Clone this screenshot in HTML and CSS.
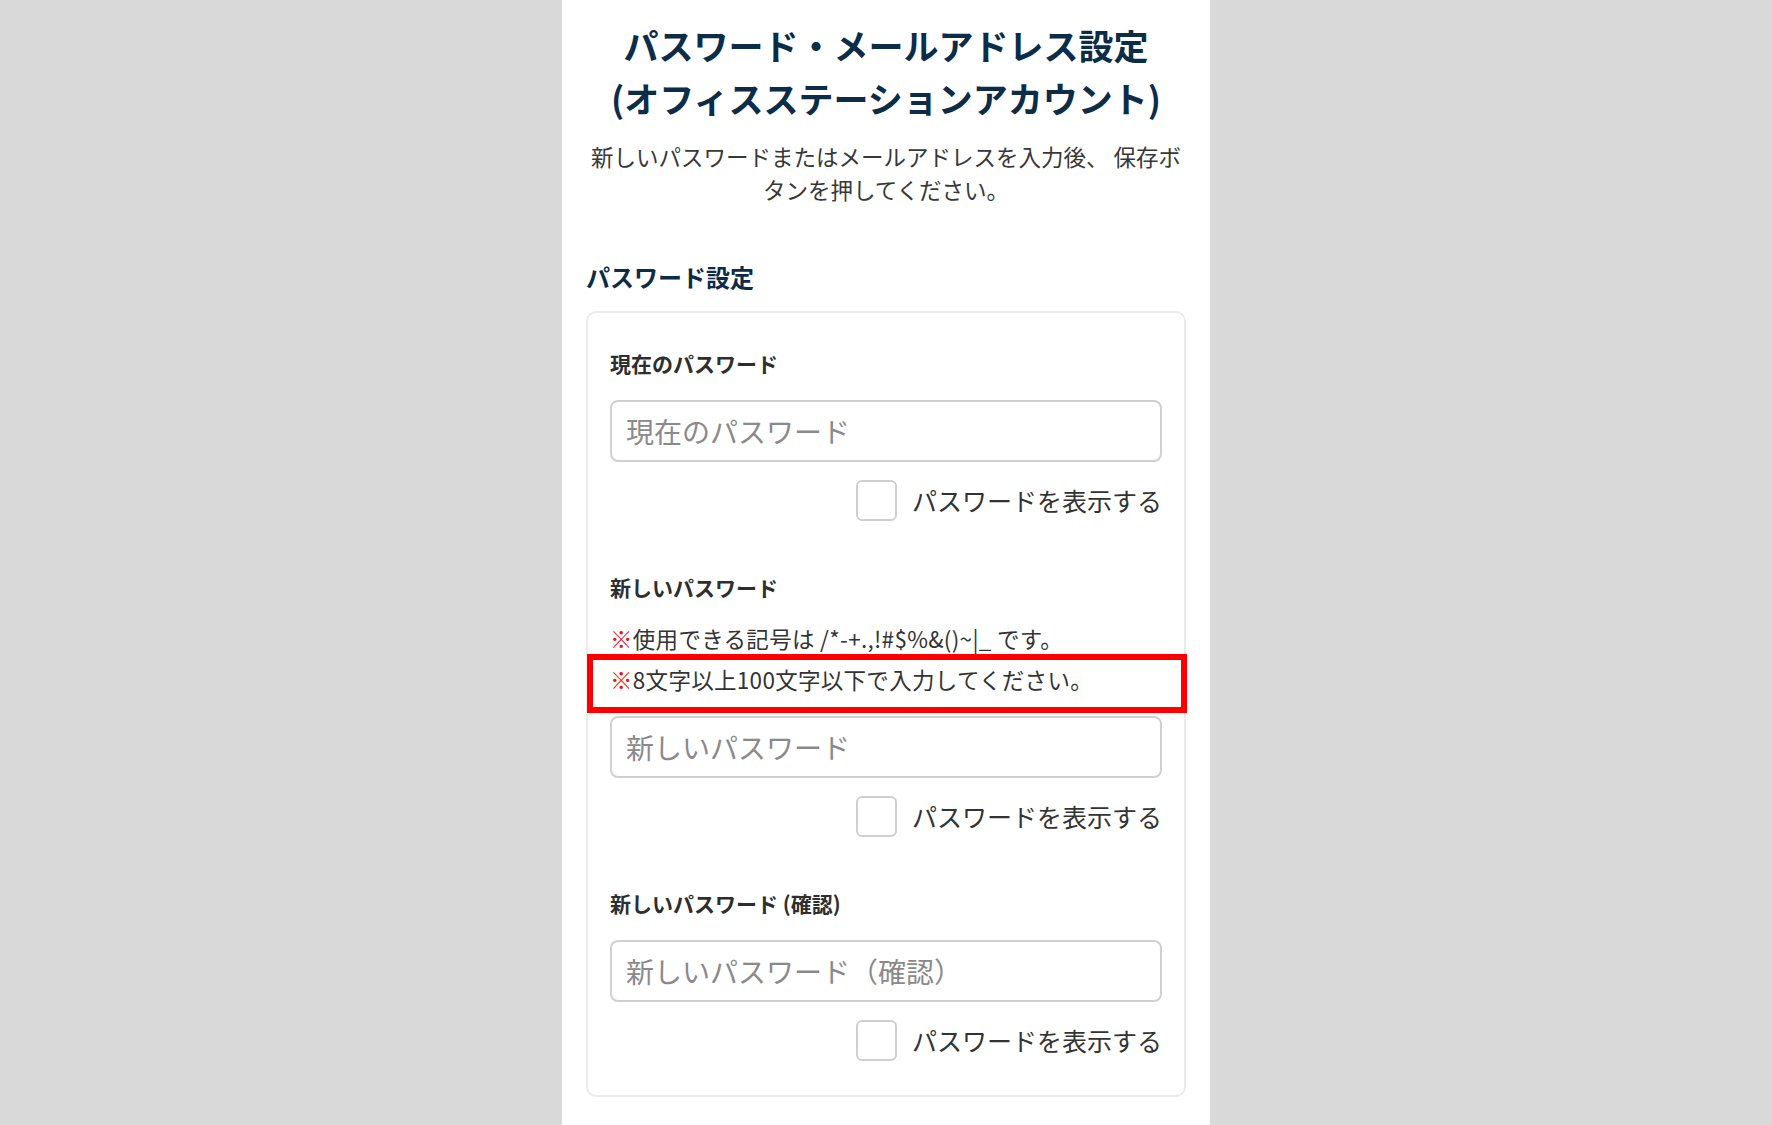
FILE: index.html
```html
<!DOCTYPE html>
<html lang="ja">
<head>
<meta charset="utf-8">
<title>パスワード・メールアドレス設定</title>
<link rel="stylesheet" href="styles.css">
</head>
<body>
<main class="page">
  <h1 class="title">パスワード・メールアドレス設定<br>(オフィスステーションアカウント)</h1>
  <p class="lead">新しいパスワードまたはメールアドレスを入力後、 保存ボタンを押してください。</p>

  <h2 class="section-heading">パスワード設定</h2>
  <section class="card">
    <div class="field">
      <label class="field-label" for="current">現在のパスワード</label>
      <input class="text-input" id="current" type="password" placeholder="現在のパスワード">
      <label class="show-row"><input class="checkbox" type="checkbox"><span class="show-text">パスワードを表示する</span></label>
    </div>

    <div class="field field--spaced">
      <label class="field-label field-label--tight" for="new">新しいパスワード</label>
      <p class="note"><span class="note-mark">※</span>使用できる記号は /*-+.,!#$%&amp;()~|_ です。</p>
      <p class="note note--highlight"><span class="note-mark">※</span>8文字以上100文字以下で入力してください。</p>
      <input class="text-input text-input--after-note" id="new" type="password" placeholder="新しいパスワード">
      <label class="show-row"><input class="checkbox" type="checkbox"><span class="show-text">パスワードを表示する</span></label>
    </div>

    <div class="field field--spaced">
      <label class="field-label" for="confirm">新しいパスワード (確認)</label>
      <input class="text-input" id="confirm" type="password" placeholder="新しいパスワード（確認）">
      <label class="show-row"><input class="checkbox" type="checkbox"><span class="show-text">パスワードを表示する</span></label>
    </div>
  </section>
</main>
</body>
</html>
```

FILE: styles.css
```css
* {
  box-sizing: border-box;
}

html, body {
  margin: 0;
  padding: 0;
}

body {
  background: #d9d9d9;
  font-family: "Noto Sans CJK JP", "Noto Sans", sans-serif;
  color: #333333;
}

.page {
  width: 648px;
  min-height: 100vh;
  margin: 0 auto;
  background: #ffffff;
  padding: 18px 24px 0;
}

.title {
  margin: 0;
  font-size: 35px;
  line-height: 53px;
  font-weight: 700;
  text-align: center;
  color: #0c2c48;
}

.lead {
  margin: 16px 0 0;
  font-size: 22.5px;
  line-height: 33px;
  text-align: center;
  color: #383838;
}

.section-heading {
  margin: 53px 0 16px;
  font-size: 24px;
  line-height: 36px;
  font-weight: 700;
  color: #0c2c48;
}

.card {
  border: 2px solid #ebebeb;
  border-radius: 10px;
  padding: 35px 22px 34px;
}

.field {
  display: flex;
  flex-direction: column;
}

.field--spaced {
  margin-top: 51px;
}

.field-label {
  font-size: 21px;
  line-height: 30px;
  font-weight: 700;
  color: #2e2e2e;
  margin-bottom: 22px;
}

.field-label--tight {
  margin-bottom: 16px;
}

.note {
  margin: 0;
  font-size: 22.5px;
  line-height: 41px;
  letter-spacing: 0.3px;
  color: #333333;
}

.note-mark {
  color: #ee1111;
  font-weight: 700;
}

.note--highlight {
  position: relative;
}

.note--highlight::after {
  content: "";
  position: absolute;
  left: -23px;
  right: -25px;
  top: -5px;
  bottom: -13px;
  border: 6px solid #ff0000;
  pointer-events: none;
}

.text-input {
  display: block;
  width: 100%;
  height: 62px;
  margin: 0;
  padding: 0 14px;
  border: 2px solid #d0d0d0;
  border-radius: 8px;
  font-family: inherit;
  font-size: 28px;
  color: #333333;
  background: #ffffff;
  outline: none;
}

.text-input::placeholder {
  color: #8a8a8a;
}

.text-input--after-note {
  margin-top: 16px;
}

.show-row {
  display: flex;
  justify-content: flex-end;
  align-items: center;
  gap: 15px;
  margin-top: 18px;
  height: 41px;
}

.checkbox {
  appearance: none;
  -webkit-appearance: none;
  width: 41px;
  height: 41px;
  margin: 0;
  border: 2px solid #cfcfcf;
  border-radius: 6px;
  background: #ffffff;
}

.show-text {
  font-size: 25px;
  line-height: 41px;
  color: #333333;
}
```
